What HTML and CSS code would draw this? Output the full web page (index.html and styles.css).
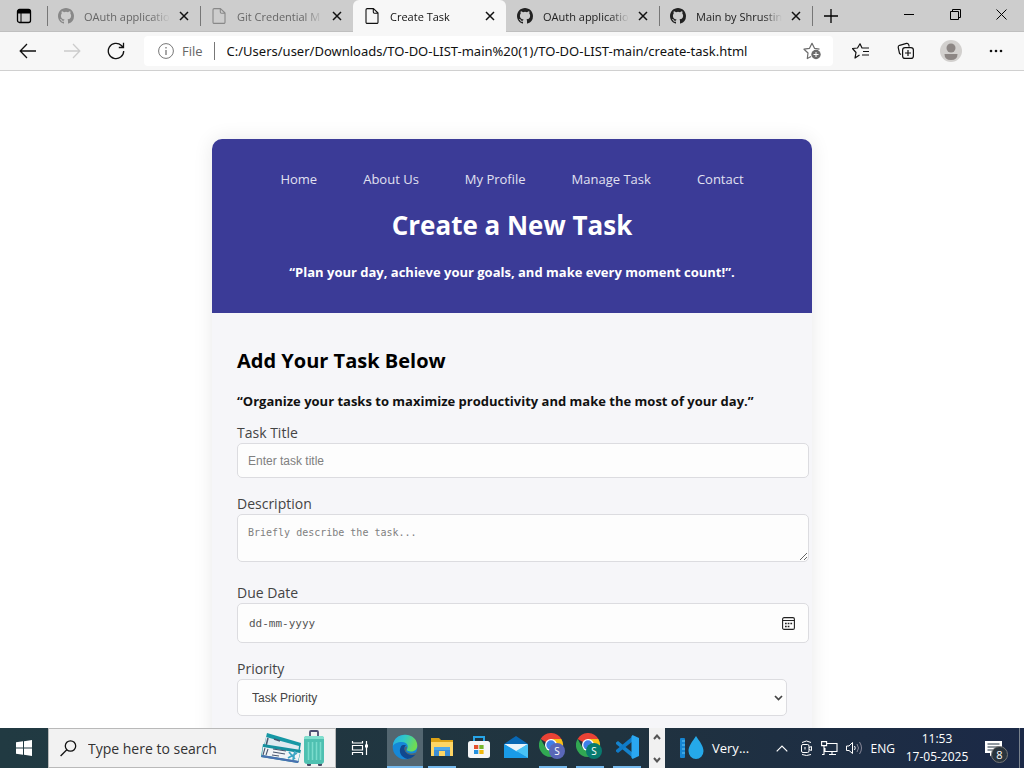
FILE: index.html
```html
<!DOCTYPE html>
<html lang="en">
<head>
<meta charset="utf-8">
<title>Create Task</title>
<link rel="stylesheet" href="styles.css">
</head>
<body>
<svg class="defs" aria-hidden="true">
  <symbol id="github" viewBox="0 0 16 16"><path fill="currentColor" fill-rule="evenodd" d="M8 0C3.58 0 0 3.58 0 8c0 3.54 2.29 6.53 5.47 7.59.4.07.55-.17.55-.38 0-.19-.01-.82-.01-1.49-2.01.37-2.53-.49-2.69-.94-.09-.23-.48-.94-.82-1.13-.28-.15-.68-.52-.01-.53.63-.01 1.08.58 1.23.82.72 1.21 1.87.87 2.33.66.07-.52.28-.87.51-1.07-1.78-.2-3.64-.89-3.64-3.95 0-.87.31-1.59.82-2.15-.08-.2-.36-1.02.08-2.12 0 0 .67-.21 2.2.82a7.6 7.6 0 0 1 4 0c1.53-1.04 2.2-.82 2.2-.82.44 1.1.16 1.92.08 2.12.51.56.82 1.27.82 2.15 0 3.07-1.87 3.75-3.65 3.95.29.25.54.73.54 1.48 0 1.07-.01 1.93-.01 2.2 0 .21.15.46.55.38A8.01 8.01 0 0 0 16 8c0-4.42-3.58-8-8-8z"/></symbol>
  <symbol id="page" viewBox="0 0 16 16"><path fill="none" stroke="currentColor" stroke-width="1.1" stroke-linejoin="round" d="M3.200.6h6.300L14 5v9.200a1.200 1.200 0 0 1-1.200 1.200H3.200A1.200 1.200 0 0 1 2 14.200V1.800A1.200 1.200 0 0 1 3.200.6zM9.300.8v3.200a1.200 1.200 0 0 0 1.200 1.200H14"/></symbol>
  <symbol id="close" viewBox="0 0 10 10"><path fill="none" stroke="currentColor" stroke-width="1.500" d="M1 1l8 8M9 1l-8 8"/></symbol>
  <symbol id="chrome" viewBox="0 0 28 28">
    <path fill="#e94235" d="M12 12 1.600 6A12 12 0 0 1 22.400 6z"/>
    <path fill="#fbc016" d="M12 12V6h10.400A12 12 0 0 1 12 24l5-9z"/>
    <path fill="#31a852" d="M1.600 6l5.200 9L12 18l2.800-.8L12 24A12 12 0 0 1 1.600 6z"/>
    <circle cx="12" cy="12" r="6" fill="#fff"/><circle cx="12" cy="12" r="4.700" fill="#3f7fe8"/>
    <circle cx="18" cy="18" r="8" fill="currentColor"/>
  </symbol>
</svg>

<header class="browser">
  <div class="tabstrip">
    <button class="tab-actions" aria-label="Tab actions"><svg width="16" height="16" viewBox="0 0 16 16"><rect x="1.500" y="1.500" width="13" height="13" rx="2" fill="none" stroke="#000" stroke-width="1.300"/><path d="M1.500 3.500a2 2 0 0 1 2-2h9a2 2 0 0 1 2 2v2h-13z"/><path d="M5 5v9" stroke="#000"/></svg></button>
    <div class="tab muted"><svg class="fav"><use href="#github"/></svg><span class="tab-title">OAuth applicatio</span><button aria-label="Close tab"><svg class="x"><use href="#close"/></svg></button></div>
    <div class="tab muted"><svg class="fav"><use href="#page"/></svg><span class="tab-title">Git Credential M</span><button aria-label="Close tab"><svg class="x"><use href="#close"/></svg></button></div>
    <div class="tab active"><svg class="fav"><use href="#page"/></svg><span class="tab-title">Create Task</span><button aria-label="Close tab"><svg class="x"><use href="#close"/></svg></button></div>
    <div class="tab"><svg class="fav"><use href="#github"/></svg><span class="tab-title">OAuth applicatio</span><button aria-label="Close tab"><svg class="x"><use href="#close"/></svg></button></div>
    <div class="tab"><svg class="fav"><use href="#github"/></svg><span class="tab-title">Main by Shrustin</span><button aria-label="Close tab"><svg class="x"><use href="#close"/></svg></button></div>
    <button class="new-tab" aria-label="New tab"><svg width="14" height="14" viewBox="0 0 14 14"><path d="M7 0v14M0 7h14" stroke="#000" stroke-width="1.300"/></svg></button>
    <div class="window-controls">
      <button aria-label="Minimize"><svg width="11" height="11"><path d="M0 5.500h10" stroke="#000"/></svg></button>
      <button aria-label="Restore"><svg width="11" height="11"><path d="M.5 2.500h8v8h-8zM2.500 2.500v-2h8v8h-2" fill="none" stroke="#000"/></svg></button>
      <button aria-label="Close"><svg width="11" height="11"><path d="M.5.5l10 10M10.500.5l-10 10" stroke="#000"/></svg></button>
    </div>
  </div>
  <div class="toolbar">
    <button class="tool" aria-label="Back"><svg width="18" height="16" viewBox="0 0 18 16"><path d="M17 8H1.500M8 1 1.200 8 8 15" fill="none" stroke="#111" stroke-width="1.300"/></svg></button>
    <button class="tool" aria-label="Forward"><svg width="18" height="16" viewBox="0 0 18 16"><path d="M1 8h15.500M10 1l6.800 7L10 15" fill="none" stroke="#ccc" stroke-width="1.300"/></svg></button>
    <button class="tool" aria-label="Refresh"><svg width="18" height="18" viewBox="0 0 18 18"><path d="M16.700 9A7.700 7.700 0 1 1 14.400 3.500l1.800 1.800M16.500.800v4.700h-4.700" fill="none" stroke="#111" stroke-width="1.300"/></svg></button>
    <div class="address">
      <svg width="16" height="16" viewBox="0 0 16 16" fill="none" stroke="#777"><circle cx="8" cy="8" r="7.400"/><path d="M8 7v5M8 4v1.500" stroke-width="1.300"/></svg>
      <span class="scheme">File</span>
      <input class="url" aria-label="Address" value="C:/Users/user/Downloads/TO-DO-LIST-main%20(1)/TO-DO-LIST-main/create-task.html">
      <button aria-label="Add to favorites"><svg width="18" height="18" viewBox="0 0 18 18"><path d="M8 14.500l-3.700 2L5 11 1 7.200l5.500-.9L9 1.300l2.500 5 5 .9" fill="none" stroke="#6c6c6c" stroke-width="1.200" stroke-linejoin="round"/><circle cx="13" cy="12.500" r="4.700" fill="#6c6c6c"/><path d="M13 10v5M10.500 12.500h5" stroke="#fff"/></svg></button>
    </div>
    <button class="tool2" aria-label="Favorites"><svg width="18" height="16" viewBox="0 0 18 16"><path d="M7.500 12 3 15l1-5.500-3.500-4 5-.5L8 .8 10 5h7M11 8.500h6M10 12h7" fill="none" stroke="#111" stroke-width="1.200" stroke-linejoin="round"/></svg></button>
    <button class="tool2" aria-label="Collections"><svg width="18" height="18" viewBox="0 0 18 18" fill="none" stroke="#111" stroke-width="1.200"><path d="M4 12.500 2.500 11.500 1.200 5.500Q1 3.800 2.600 3.300L9.500 1.400q1.600-.3 2.200 1.200l.5 2"/><rect x="5.600" y="5.600" width="10.800" height="10.800" rx="2.500"/><path d="M11 8v6M8 11h6"/></svg></button>
    <button class="tool2" aria-label="Profile"><svg width="22" height="22" viewBox="0 0 22 22"><circle cx="11" cy="11" r="11" fill="#d2d0ce"/><circle cx="11" cy="8" r="4.500" fill="#8c8684"/><path d="M4.500 14h13q0 6-6.500 6t-6.500-6z" fill="#8c8684"/></svg></button>
    <button class="tool2" aria-label="Settings and more"><svg width="14" height="4"><g fill="#111"><circle cx="2" cy="2" r="1.300"/><circle cx="7" cy="2" r="1.300"/><circle cx="12" cy="2" r="1.300"/></g></svg></button>
  </div>
</header>

<main class="viewport">
  <section class="card">
    <header class="hero">
      <nav class="nav"><a href="#">Home</a><a href="#">About Us</a><a href="#">My Profile</a><a href="#">Manage Task</a><a href="#">Contact</a></nav>
      <h1>Create a New Task</h1>
      <p>“Plan your day, achieve your goals, and make every moment count!”.</p>
    </header>
    <form class="task-form">
      <h2>Add Your Task Below</h2>
      <p>“Organize your tasks to maximize productivity and make the most of your day.”</p>
      <label for="title">Task Title</label>
      <input class="field" id="title" type="text" placeholder="Enter task title">
      <label for="desc">Description</label>
      <textarea class="field" id="desc" placeholder="Briefly describe the task..."></textarea>
      <label for="due">Due Date</label>
      <div class="field date"><input id="due" type="text" placeholder="dd-mm-yyyy"><button type="button" aria-label="Open calendar"><svg width="13" height="13" viewBox="0 0 13 13"><rect x=".6" y=".6" width="11.800" height="11.800" rx="1.500" fill="none" stroke="#222" stroke-width="1.100"/><path d="M.6 3.500h11.800" stroke="#222"/><path d="M3 6.500h7.500M3 9.500h5" stroke="#222" stroke-width="1.600" stroke-dasharray="1.700 1"/></svg></button></div>
      <label for="priority">Priority</label>
      <div class="select"><select id="priority"><option>Task Priority</option><option>High</option><option>Medium</option><option>Low</option></select><svg width="9" height="6" viewBox="0 0 9 6"><path d="M1 1l3.500 3.500L8 1" fill="none" stroke="#444" stroke-width="1.700"/></svg></div>
    </form>
  </section>
</main>

<footer class="taskbar">
  <button class="start" aria-label="Start"><svg width="16" height="16" viewBox="0 0 16 16" fill="#fff"><path d="M0 2.300 7 1.300V7.500H0zM8 1.200 16 0v7.500H8zM0 8.500h7v6.200l-7-1zM8 8.500h8V16l-8-1.200z"/></svg></button>
  <label class="search">
    <svg width="17" height="17" viewBox="0 0 17 17" fill="none" stroke="#111" stroke-width="1.300"><circle cx="10.500" cy="6" r="5.200"/><path d="M6.800 9.800.6 16"/></svg>
    <input type="text" placeholder="Type here to search" aria-label="Type here to search">
    <svg class="travel" width="66" height="38" viewBox="0 0 66 38">
      <path d="M7 4l34 10-2 12L3 21z" fill="#1698a5"/><path d="M6 8l33 9-1 8L4 20z" fill="#dfeaf0"/>
      <path d="M8 9l-2 8M14 10l6 2" stroke="#49566e" stroke-width="1.500"/>
      <path d="M3 15l38 6-3 13L1 28z" fill="#15909f"/><path d="M3 18l37 6-2 8L2 26z" fill="#f2f4f6"/>
      <path d="M5 19l-2 7M8 20l-2 6M13 20l13 2M13 23l12 2M12 26l7 1" stroke="#49566e" stroke-width="1.100"/>
      <path d="M2 26l37 6-1 2L1 28z" fill="#4a70b0"/>
      <path d="M28 29l9-5M29 23l6 7M35 22l-2 9" stroke="#3da6c4" stroke-width="1.800"/>
      <path d="M50 8V3q0-1 1-1h6q1 0 1 1v5" fill="none" stroke="#4b4d71" stroke-width="1.800"/>
      <rect x="47" y="34" width="4" height="3" rx="1" fill="#474a64"/><rect x="58" y="34" width="4" height="3" rx="1" fill="#474a64"/>
      <rect x="44" y="7" width="20" height="28" rx="3" fill="#4fc0b1"/><path d="M44 10v-1q0-2 3-2h14q3 0 3 2v1z" fill="#81dfce"/>
      <path d="M48.500 13v18M52.500 13v18M56.500 13v18M60.500 13v18" stroke="#7bdccd" stroke-width="1.500"/>
    </svg>
  </label>
  <button class="task-view" aria-label="Task view"><svg width="18" height="16" viewBox="0 0 18 16" fill="none" stroke="#fff" stroke-width="1.200"><path d="M1.500 1v2h10V1M1.500 15v-2.500h10V15M1.500 5.500h10v4.500h-10zM15.500 1v14"/><path d="M14 6h3" stroke-width="3"/></svg></button>
  <div class="apps">
    <button class="app current" aria-label="Microsoft Edge"><svg width="26" height="26" viewBox="0 0 26 26"><defs><linearGradient id="eg" x2="1" y2=".3"><stop stop-color="#27a9e7"/><stop offset=".5" stop-color="#30c9c7"/><stop offset="1" stop-color="#6edb55"/></linearGradient></defs><circle cx="13" cy="13" r="12.300" fill="#1588d8"/><path d="M.8 12C1.500 4 7 .7 13 .7c8 0 12.300 5.600 12.300 10.800 0 3.800-2.700 6-6 6-2.600 0-4.800-1-4.300-2.300 2-3 .2-7.200-5-7.200C5 8 2 10 .8 12z" fill="url(#eg)"/><path d="M9 12.500c-3 5 0 11 6.500 12.500 4.500-.5 7.500-3.200 9-6-4.500 2.500-12 1.300-12-5 0-1 .6-2 1.500-2.500-2-.8-4-.4-5 1z" fill="#11488f"/><path d="M14.500 15c-1.500 3 2 4.600 5 4.500 3-.1 5-1.300 5.500-1.500l.8.200-.8 2c-5 2-12 .3-12.500-5 0-1.500 1-2.700 1.700-3 1 .7 1 1.800.3 2.800z" fill="#536670"/></svg></button>
    <button class="app" aria-label="File Explorer"><svg width="22" height="20" viewBox="0 0 22 20"><path d="M0 1h8l2 2h12v4H0z" fill="#dda215"/><path d="M0 5h22v14H0z" fill="#ffd665"/><path d="M3 10h16v9h-5v-5H8v5H3z" fill="#3d8ed5"/><path d="M3 10h16v3H3z" fill="#52a9e8"/></svg></button>
    <button class="app idle" aria-label="Microsoft Store"><svg width="24" height="24" viewBox="0 0 24 24"><path d="M7 8V2h10v6" fill="none" stroke="#27a5e8" stroke-width="2"/><rect x="1" y="6" width="22" height="17" rx="2.500" fill="#f5f6f7"/><path d="M7 10h4.300v4H7z" fill="#e5502b"/><path d="M12.300 10h4.300v4h-4.300z" fill="#76b62a"/><path d="M7 15h4.300v4H7z" fill="#2491df"/><path d="M12.300 15h4.300v4h-4.300z" fill="#f2b90d"/></svg></button>
    <button class="app idle" aria-label="Mail"><svg width="24" height="24" viewBox="0 0 24 24"><path d="M0 9 12 1l12 8v14H0z" fill="#0868b5"/><path d="M0 9h24L12 17z" fill="#e9f4fb"/><path d="M0 9l24 14H0z" fill="#199be8"/><path d="M24 9v14L12 16z" fill="#48c2f5"/></svg></button>
    <button class="app" aria-label="Chrome profile one"><svg class="chrome-one" width="28" height="28"><use href="#chrome"/></svg><span class="profile-letter">S</span></button>
    <button class="app" aria-label="Chrome profile two"><svg class="chrome-two" width="28" height="28"><use href="#chrome"/></svg><span class="profile-letter">S</span></button>
    <button class="app" aria-label="Visual Studio Code"><svg width="24" height="24" viewBox="0 0 24 24"><path d="M1 7.500 3 6l15 12v5L1 9z" fill="#1583cc"/><path d="M1 16.500 3 18 18 6V1L1 15z" fill="#0f7bc8"/><path d="M17.500 0 24 3v18l-6.500 3-1-1.500V1.500z" fill="#2aa7f1"/></svg></button>
  </div>
  <div class="scroller"><button aria-label="Scroll up"><svg width="8" height="6"><path d="M1 5l3-3.500L7 5" fill="none" stroke="#555" stroke-width="2"/></svg></button><button aria-label="Scroll down"><svg width="8" height="6"><path d="M1 1l3 3.500L7 1" fill="none" stroke="#555" stroke-width="2"/></svg></button></div>
  <div class="weather"><svg width="24" height="26" viewBox="0 0 24 26"><rect y="3" width="5" height="20" rx="1" fill="#1686d2"/><path d="M2 6h3M2 10h3M2 14h3M2 18h3" stroke="#66c8f5"/><path d="M16 1c4 6 7.500 10 7.500 15a7.500 8 0 0 1-15 0C8.500 11 12 7 16 1z" fill="#25a9e9"/></svg><span>Very...</span></div>
  <div class="tray">
    <svg width="12" height="7" viewBox="0 0 12 7"><path d="M.7 6.300 6 1l5.300 5.300" fill="none" stroke="#fff" stroke-width="1.200"/></svg>
    <svg width="13" height="16" viewBox="0 0 13 16" fill="none" stroke="#fff"><rect x="1.500" y="4.500" width="7.500" height="8" rx="1.500"/><path d="M9 7.500l2.500-1v4L9 9.500M2 2.500q4.500-3 9 0M2 14.500q4.500 2 9 0M5 7v2.500"/></svg>
    <svg width="17" height="14" viewBox="0 0 17 14" fill="none" stroke="#fff" stroke-width="1.100"><path d="M6 2.500h10v8H4V7M8 13.500h7M11 10.500v3M.6.600h5v4h-5zM3 4.500v9H1"/></svg>
    <svg width="17" height="14" viewBox="0 0 17 14" fill="none" stroke="#fff"><path d="M.5 5h2.500L6.500 1.500v11L3 9.500H.5zM8.500 5q1.500 2 0 4"/><path d="M11 3q3 4 0 8M13.500 1q4 6 0 12" stroke="#889"/></svg>
    <span>ENG</span>
  </div>
  <div class="clock"><span>11:53</span><span>17-05-2025</span></div>
  <button class="notifications" aria-label="8 notifications"><svg width="17" height="17" viewBox="0 0 17 17"><path d="M0 1h17v12H8l-3 3.500V13H0z" fill="#fff"/><path d="M2.500 4h12M2.500 7h12M2.500 10h7" stroke="#1e3040"/></svg><span class="badge">8</span></button>
  <div class="show-desktop"></div>
</footer>
</body>
</html>
```
FILE: styles.css
```css
* { box-sizing: border-box; }
body {
  margin: 0;
  height: 100vh;
  display: flex;
  flex-direction: column;
  overflow: hidden;
  background: #fff;
  font-family: "Open Sans", "Noto Sans", sans-serif;
  font-size: 12px;
}
button { border: 0; padding: 0; background: none; font: inherit; color: inherit; display: flex; align-items: center; justify-content: center; }
svg { display: block; flex: none; }
.defs { position: absolute; width: 0; height: 0; }

.browser { flex: none; border-bottom: 1px solid #d0d0d0; background: #f7f7f7; }
.tabstrip { display: flex; height: 32px; background: #cdcdcd; box-shadow: inset 0 -1px #bfbfbf; }
.tab-actions { width: 47px; flex: none; }
.tab { flex: 0 1 153px; min-width: 0; display: flex; align-items: center; padding: 0 11px 0 10px; color: #222; font-size: 11px; }
.tab::before { content: ""; align-self: center; height: 20px; width: 1px; margin-left: -10px; margin-right: 10px; background: #777; }
.tab.muted { color: #666; }
.tab.active { background: #f7f7f7; border-radius: 6px 6px 0 0; color: #111; }
.tab.active::before, .tab.active + .tab::before { background: transparent; }
.fav { width: 16px; height: 16px; margin-right: 10px; }
.tab.muted .fav { color: #888; }
.tab-title { flex: 1; min-width: 0; white-space: nowrap; -webkit-mask-image: linear-gradient(90deg, #000 78%, transparent); mask-image: linear-gradient(90deg, #000 78%, transparent); }
.tab button { margin-left: 9px; color: #111; }
.x { width: 10px; height: 10px; }
.new-tab { width: 36px; flex: none; border-left: 1px solid #777; margin: 6px 0; }
.window-controls { display: flex; margin-left: auto; padding-bottom: 4px; }
.window-controls button { width: 46px; }

.toolbar { display: flex; align-items: center; height: 38px; padding: 0 6px; }
.tool { width: 44px; height: 30px; flex: none; }
.address { flex: 1; min-width: 0; height: 30px; margin: 0 5px 0 6px; padding: 0 12px 0 14px; display: flex; align-items: center; background: #fff; border-radius: 4px; }
.scheme { margin-left: 8px; padding-right: 11px; border-right: 1px solid #777; color: #666; font-size: 13px; line-height: 18px; }
.url { flex: 1; min-width: 0; border: 0; padding: 0 0 0 12px; background: none; color: #111; font: 13px "Noto Sans", sans-serif; }
.tool2 { width: 45px; height: 30px; flex: none; }

.viewport { flex: 1; min-height: 0; overflow: hidden; padding: 68px 20px 0; }
.card { max-width: 600px; margin: 0 auto; padding-bottom: 40px; background: #f6f6f9; border-radius: 10px; box-shadow: 0 0 20px rgba(0, 0, 0, .09); }
.hero { padding: 30px 25px; background: #3b3b97; color: #fff; text-align: center; border-radius: 10px 10px 0 0; }
.nav { display: flex; justify-content: center; gap: 46px; }
.nav a { color: #e1e1f1; text-decoration: none; font-size: 13px; line-height: 20px; }
.hero h1 { margin: 16px 0; font-size: 26px; line-height: 40px; font-weight: 700; }
.hero p { margin: 0; font-size: 13px; line-height: 22px; font-weight: 700; }

.task-form { padding: 32px 25px; color: #444; }
.task-form h2 { margin: 0; color: #000; font-size: 20px; line-height: 32px; }
.task-form p { margin: 14px 0 12px; color: #111; font-size: 13px; line-height: 20px; font-weight: 700; }
.task-form label { display: block; font-size: 14px; line-height: 20px; }
.field { display: block; width: calc(100% + 22px); height: 35px; margin-bottom: 16px; padding: 9px 10px; border: 1px solid #dcdce0; border-radius: 5px; background: #fdfdfd; font: 12px "Liberation Sans", sans-serif; color: #444; }
.field::placeholder { color: #808080; }
textarea.field { height: 48px; margin-bottom: 21px; padding: 12px 10px; font: 10px "DejaVu Sans Mono", monospace; resize: vertical; }
.date { display: flex; align-items: center; height: 40px; padding: 0 13px 0 11px; }
.date input { flex: 1; min-width: 0; border: 0; padding: 0; background: none; font: 11px "DejaVu Sans Mono", monospace; }
.date input::placeholder { color: #555; }
.select { display: grid; align-items: center; }
.select select { grid-area: 1 / 1; width: 100%; height: 37px; padding: 0 14px; border: 1px solid #dcdce0; border-radius: 5px; background: #fdfdfd; appearance: none; color: #444; font: 12px "Liberation Sans", sans-serif; }
.select svg { grid-area: 1 / 1; justify-self: end; margin-right: 4px; pointer-events: none; }

.taskbar { flex: none; display: flex; height: 40px; color: #fff; background: linear-gradient(90deg, #213a42, #20333f 60%, #1b2947); }
.start { width: 48px; flex: none; }
.search { width: 288px; flex: none; display: flex; align-items: center; padding: 0 9px 0 11px; background: #f2f2f2; border: 1px solid #b9b9b9; }
.search input { flex: 1; min-width: 0; border: 0; padding: 0 0 0 11px; background: none; font: 14px "Open Sans", sans-serif; }
.search input::placeholder { color: #333; }
.task-view { width: 48px; flex: none; }
.apps { display: flex; gap: 9px; padding-left: 3px; width: 265px; flex: none; }
.app { position: relative; width: 28px; border-bottom: 2px solid #75b9ed; }
.app.current { width: 36px; margin-right: -4px; background: #536670; }
.app.idle { border-color: transparent; }
.chrome-one { color: #5967b7; }
.chrome-two { color: #087b6f; }
.profile-letter { position: absolute; left: 14px; top: 17px; width: 8px; font-size: 10px; line-height: 12px; text-align: center; }
.scroller { width: 16px; flex: none; display: flex; flex-direction: column; align-items: center; justify-content: space-between; padding: 6px 0 5px; background: #f1f1f1; }
.weather { display: flex; align-items: center; gap: 8px; margin-left: 15px; font-size: 13px; }
.tray { display: flex; align-items: center; gap: 8px; margin-left: auto; }
.tray svg:first-child { margin-right: 4px; }
.clock { width: 84px; display: flex; flex-direction: column; align-items: center; justify-content: center; line-height: 18px; }
.notifications { position: relative; width: 28px; margin-right: 12px; }
.badge { position: absolute; left: 12px; top: 18px; width: 17px; height: 17px; border-radius: 50%; border: 1px solid #777; background: #29343d; font-size: 11px; line-height: 15px; text-align: center; }
.show-desktop { width: 5px; border-left: 1px solid #78818c; }
```
